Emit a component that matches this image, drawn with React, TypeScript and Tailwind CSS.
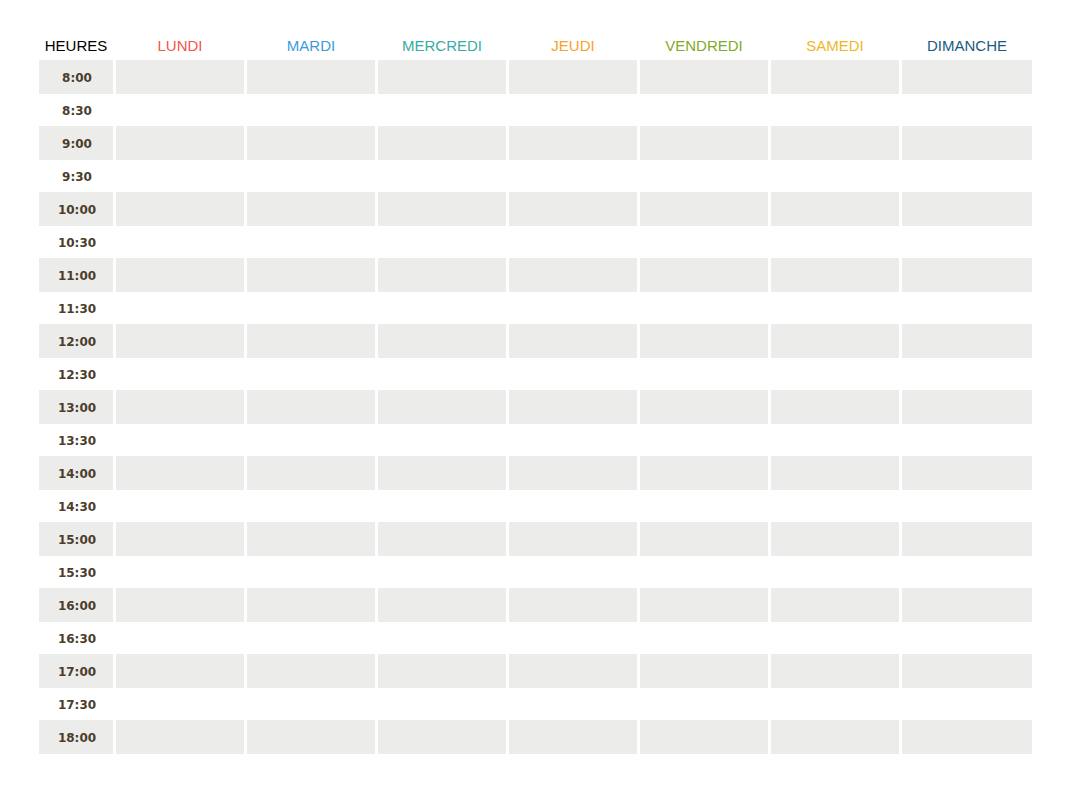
const days = [
  { name: "LUNDI", color: "text-[#f4554c]" },
  { name: "MARDI", color: "text-[#3b9bdb]" },
  { name: "MERCREDI", color: "text-[#36aca4]" },
  { name: "JEUDI", color: "text-[#f7a22e]" },
  { name: "VENDREDI", color: "text-[#7faa2b]" },
  { name: "SAMEDI", color: "text-[#efb71f]" },
  { name: "DIMANCHE", color: "text-[#1d5a80]" },
];

const hours: string[] = [];
for (let h = 8; h <= 18; h++) {
  hours.push(`${h}:00`);
  if (h < 18) hours.push(`${h}:30`);
}

const cols = "grid grid-cols-[74px_repeat(6,128px)_130px] gap-x-[3px]";

export default function App() {
  return (
    <div className="min-h-[793px] w-[1070px] bg-white pl-[39px] pt-[30px]">
      <div className={`${cols} h-[30px] items-center pt-[2px] font-['Liberation_Sans',sans-serif] text-[15px]`}>
        <div className="text-center text-black">HEURES</div>
        {days.map((d) => (
          <div key={d.name} className={`text-center ${d.color}`}>
            {d.name}
          </div>
        ))}
      </div>

      {hours.map((t) => {
        const full = t.endsWith(":00");
        return (
          <div key={t} className={`${cols} ${full ? "h-[34px]" : "h-[32px]"}`}>
            <div
              className={`flex items-center justify-center pt-[2px] pl-[2px] font-['DejaVu_Sans',sans-serif] text-[12px] font-bold text-[#4b3d2c] ${
                full ? "bg-[#ececea]" : ""
              }`}
            >
              {t}
            </div>
            {days.map((d) => (
              <div key={d.name} className={full ? "bg-[#ececea]" : ""} />
            ))}
          </div>
        );
      })}
    </div>
  );
}
